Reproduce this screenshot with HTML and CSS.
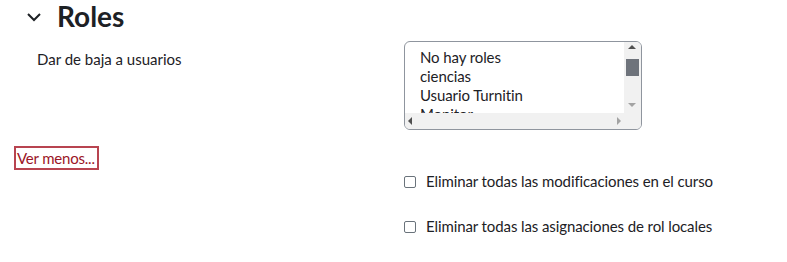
FILE: index.html
```html
<!DOCTYPE html>
<html lang="es">
<head>
    <meta charset="UTF-8">
    <title>Roles</title>
    <link rel="stylesheet" href="styles.css">
</head>
<body>
    <div class="section-head">
        <svg class="chevron" width="16" height="10" viewBox="0 0 16 10">
            <path d="M2 2 L8 8 L14 2" fill="none" stroke="#1d2125" stroke-width="2"/>
        </svg>
        <h3>Roles</h3>
    </div>

    <div class="row">
        <div class="label">Dar de baja a usuarios</div>
        <div class="listbox">
            <div class="list-top">
                <div class="options">
                    <div>No hay roles</div>
                    <div>ciencias</div>
                    <div>Usuario Turnitin</div>
                    <div>Monitor</div>
                </div>
                <div class="vscroll">
                    <span class="arrow up"></span>
                    <span class="thumb"></span>
                    <span class="arrow down"></span>
                </div>
            </div>
            <div class="hscroll">
                <span class="arrow left"></span>
                <span class="arrow right"></span>
            </div>
        </div>
    </div>

    <a class="more" href="#">Ver menos...</a>

    <div class="checks">
        <label class="check"><span class="box"></span>Eliminar todas las modificaciones en el curso</label>
        <label class="check"><span class="box"></span>Eliminar todas las asignaciones de rol locales</label>
    </div>
</body>
</html>
```

FILE: styles.css
```css
body {
    margin: 0;
    font-family: Lato, "Noto Sans", sans-serif;
    font-size: 15px;
    color: #1d2125;
    background: white;
}
.section-head {
    display: flex;
    align-items: center;
    height: 32px;
    padding-left: 26px;
}
.chevron {
    margin-top: 1px;
}
.section-head h3 {
    margin: 0 0 0 15px;
    font-size: 28px;
    font-weight: 700;
    line-height: 32px;
}
.row {
    display: flex;
    margin-top: 9px;
}
.label {
    width: 367px;
    padding-left: 37px;
    padding-top: 9px;
    line-height: 19px;
}
.listbox {
    width: 236px;
    height: 87px;
    border: 1px solid #8f959e;
    border-radius: 6px;
    overflow: hidden;
    display: flex;
    flex-direction: column;
}
.list-top {
    display: flex;
    height: 71px;
}
.options {
    flex: 1;
    padding: 6px 0 0 15px;
    line-height: 19px;
    overflow: hidden;
    white-space: nowrap;
    letter-spacing: -0.1px;
}
.vscroll {
    width: 17px;
    background: #f1f1f1;
    position: relative;
}
.thumb {
    position: absolute;
    left: 2px;
    top: 17px;
    width: 13px;
    height: 17px;
    background: #6e737b;
}
.arrow {
    position: absolute;
    width: 0;
    height: 0;
    border: 4px solid transparent;
}
.arrow.up {
    left: 4px;
    top: 3px;
    border-bottom: 4px solid #505050;
    border-top-width: 0;
}
.arrow.down {
    left: 4px;
    bottom: 6px;
    border-top: 4px solid #a3a3a3;
    border-bottom-width: 0;
}
.hscroll {
    height: 16px;
    background: #f1f1f1;
    position: relative;
}
.arrow.left {
    left: 3px;
    top: 4px;
    border-right: 4px solid #505050;
    border-left-width: 0;
}
.arrow.right {
    right: 20px;
    top: 4px;
    border-left: 4px solid #a3a3a3;
    border-right-width: 0;
}
.more {
    display: inline-block;
    margin: 16px 0 0 14px;
    border: 2px solid #b84450;
    padding: 0 2px 0 1px;
    color: #9b1526;
    text-decoration: none;
    line-height: 20px;
    letter-spacing: -0.2px;
}
.checks {
    display: flex;
    flex-direction: column;
    gap: 26px;
    margin: 2px 0 0 404px;
}
.check {
    display: flex;
    align-items: center;
    line-height: 19px;
    letter-spacing: -0.1px;
}
.box {
    width: 10px;
    height: 10px;
    border: 1px solid #6a737b;
    border-radius: 2px;
    margin-right: 10px;
}
```
